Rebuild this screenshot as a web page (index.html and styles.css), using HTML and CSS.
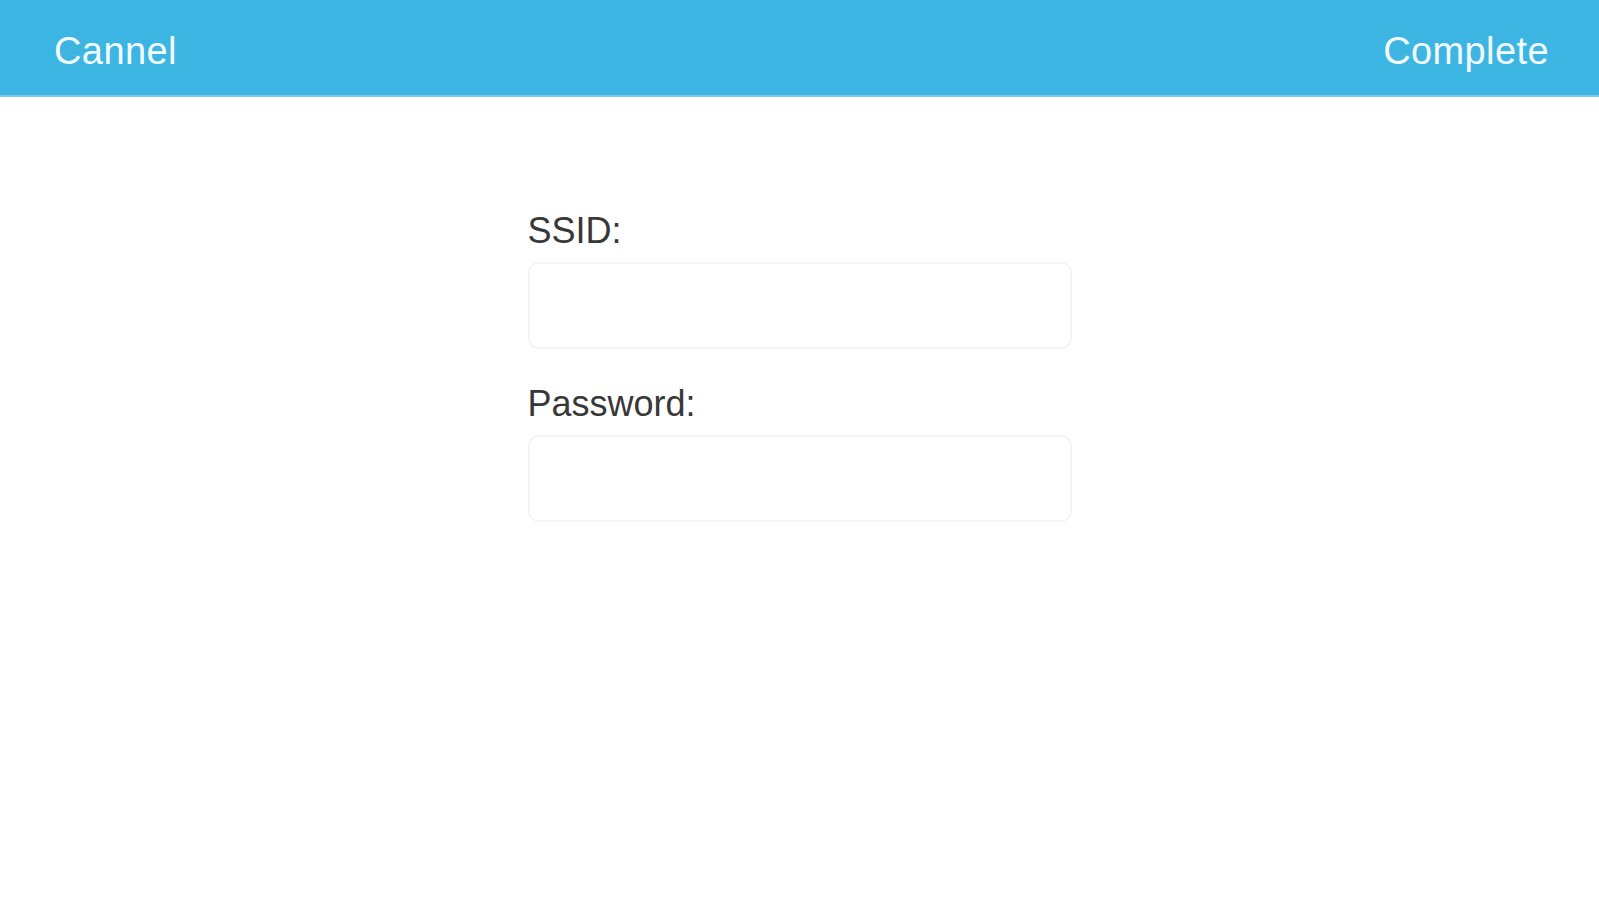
FILE: index.html
```html
<!DOCTYPE html>
<html lang="en">
<head>
<meta charset="utf-8">
<title>Wi-Fi</title>
<link rel="stylesheet" href="styles.css">
</head>
<body>
<header class="topbar">
  <span class="topbar-btn">Cannel</span>
  <span class="topbar-btn">Complete</span>
</header>
<main class="form">
  <label class="field-label" for="ssid">SSID:</label>
  <input class="field-input" id="ssid" type="text">
  <label class="field-label second" for="pwd">Password:</label>
  <input class="field-input" id="pwd" type="password">
</main>
</body>
</html>
```

FILE: styles.css
```css
html, body {
  margin: 0;
  padding: 0;
  background: #ffffff;
  font-family: "Liberation Sans", Arial, sans-serif;
}
.topbar {
  height: 97px;
  background: #3db5e3;
  display: flex;
  align-items: center;
  justify-content: space-between;
  padding: 6px 50px 0 54px;
  box-sizing: border-box;
  border-bottom: 2px solid #7ccbec;
}
.topbar-btn {
  color: #f2fbff;
  font-size: 38px;
  line-height: 1;
  letter-spacing: 0.4px;
}
.form {
  width: 544px;
  margin: 112px auto 0;
  display: flex;
  flex-direction: column;
}
.field-label {
  font-size: 36px;
  line-height: 43px;
  color: #383838;
  margin-bottom: 10px;
}
.field-label.second {
  margin-top: 33px;
  margin-bottom: 10px;
}
.field-input {
  height: 87px;
  box-sizing: border-box;
  border: 2px solid #f5f5f5;
  border-radius: 10px;
  background: #ffffff;
  outline: none;
  font-size: 30px;
  padding: 0 16px;
}
```
